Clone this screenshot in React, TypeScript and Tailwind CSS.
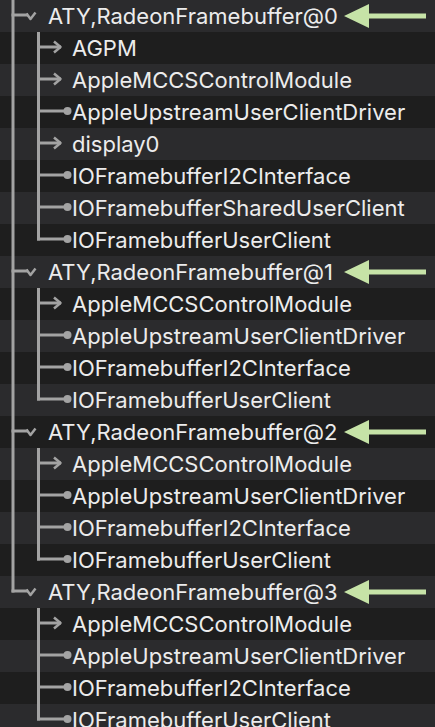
import React from 'react';

type Kind = 'arrow' | 'dot';

const groups: { name: string; children: [string, Kind][] }[] = [
  {
    name: 'ATY,RadeonFramebuffer@0',
    children: [
      ['AGPM', 'arrow'],
      ['AppleMCCSControlModule', 'arrow'],
      ['AppleUpstreamUserClientDriver', 'dot'],
      ['display0', 'arrow'],
      ['IOFramebufferI2CInterface', 'dot'],
      ['IOFramebufferSharedUserClient', 'dot'],
      ['IOFramebufferUserClient', 'dot'],
    ],
  },
  {
    name: 'ATY,RadeonFramebuffer@1',
    children: [
      ['AppleMCCSControlModule', 'arrow'],
      ['AppleUpstreamUserClientDriver', 'dot'],
      ['IOFramebufferI2CInterface', 'dot'],
      ['IOFramebufferUserClient', 'dot'],
    ],
  },
  {
    name: 'ATY,RadeonFramebuffer@2',
    children: [
      ['AppleMCCSControlModule', 'arrow'],
      ['AppleUpstreamUserClientDriver', 'dot'],
      ['IOFramebufferI2CInterface', 'dot'],
      ['IOFramebufferUserClient', 'dot'],
    ],
  },
  {
    name: 'ATY,RadeonFramebuffer@3',
    children: [
      ['AppleMCCSControlModule', 'arrow'],
      ['AppleUpstreamUserClientDriver', 'dot'],
      ['IOFramebufferI2CInterface', 'dot'],
      ['IOFramebufferUserClient', 'dot'],
    ],
  },
];

const LINE = '#a3a3a3';

// tree guide for a top-level row: outer rail + elbow + disclosure chevron
const GroupGuide = ({ last }: { last: boolean }) => (
  <svg width="48" height="32" className="shrink-0" fill="none" stroke={LINE} strokeWidth="3">
    <line x1="13" y1="0" x2="13" y2={last ? 16.5 : 32} />
    <line x1="11.5" y1="15" x2="28" y2="15" />
    <polyline points="26.5,13.5 30.5,19 35.5,12.5" strokeWidth="2.5" strokeLinejoin="round" />
  </svg>
);

// tree guide for a child row: outer rail, inner rail, and arrow or dot terminal
const ChildGuide = ({ outer, last, kind }: { outer: boolean; last: boolean; kind: Kind }) => (
  <svg width="72" height="32" className="shrink-0" fill="none" stroke={LINE} strokeWidth="3">
    {outer && <line x1="13" y1="0" x2="13" y2="32" />}
    <line x1="38.5" y1="0" x2="38.5" y2={last ? 16.5 : 32} />
    {kind === 'arrow' ? (
      <>
        <line x1="37" y1="15" x2="61" y2="15" />
        <polyline points="54,9.5 60.5,15 54,20.5" strokeWidth="2.5" strokeLinejoin="round" />
      </>
    ) : (
      <>
        <line x1="37" y1="15" x2="66" y2="15" />
        <circle cx="67.5" cy="15" r="4" fill={LINE} stroke="none" />
      </>
    )}
  </svg>
);

const Pointer = () => (
  <svg width="84" height="26" viewBox="0 0 84 26" className="ml-auto mr-[7px] shrink-0">
    <polygon points="0,13 25,1 25,10.5 82,10.5 82,15.5 25,15.5 25,25" fill="#c6e3a7" />
  </svg>
);

export default function App() {
  let idx = 0;
  const rowBg = () => (idx++ % 2 === 0 ? 'bg-[#2b2b2d]' : 'bg-[#1e1e1e]');

  return (
    <div
      className="w-[435px] h-[727px] overflow-hidden bg-[#1e1e1e] text-[#ececec] text-[22px] leading-none"
      style={{ fontFamily: 'Inter, "Noto Sans", sans-serif' }}
    >
      {groups.map((g, gi) => {
        const lastGroup = gi === groups.length - 1;
        return (
          <div key={g.name}>
            <div className={`flex items-center h-8 ${rowBg()}`}>
              <GroupGuide last={lastGroup} />
              <span className="whitespace-nowrap">{g.name}</span>
              <Pointer />
            </div>
            {g.children.map(([name, kind], ci) => (
              <div key={name} className={`flex items-center h-8 ${rowBg()}`}>
                <ChildGuide outer={!lastGroup} last={ci === g.children.length - 1} kind={kind} />
                <span className="whitespace-nowrap">{name}</span>
              </div>
            ))}
          </div>
        );
      })}
    </div>
  );
}
